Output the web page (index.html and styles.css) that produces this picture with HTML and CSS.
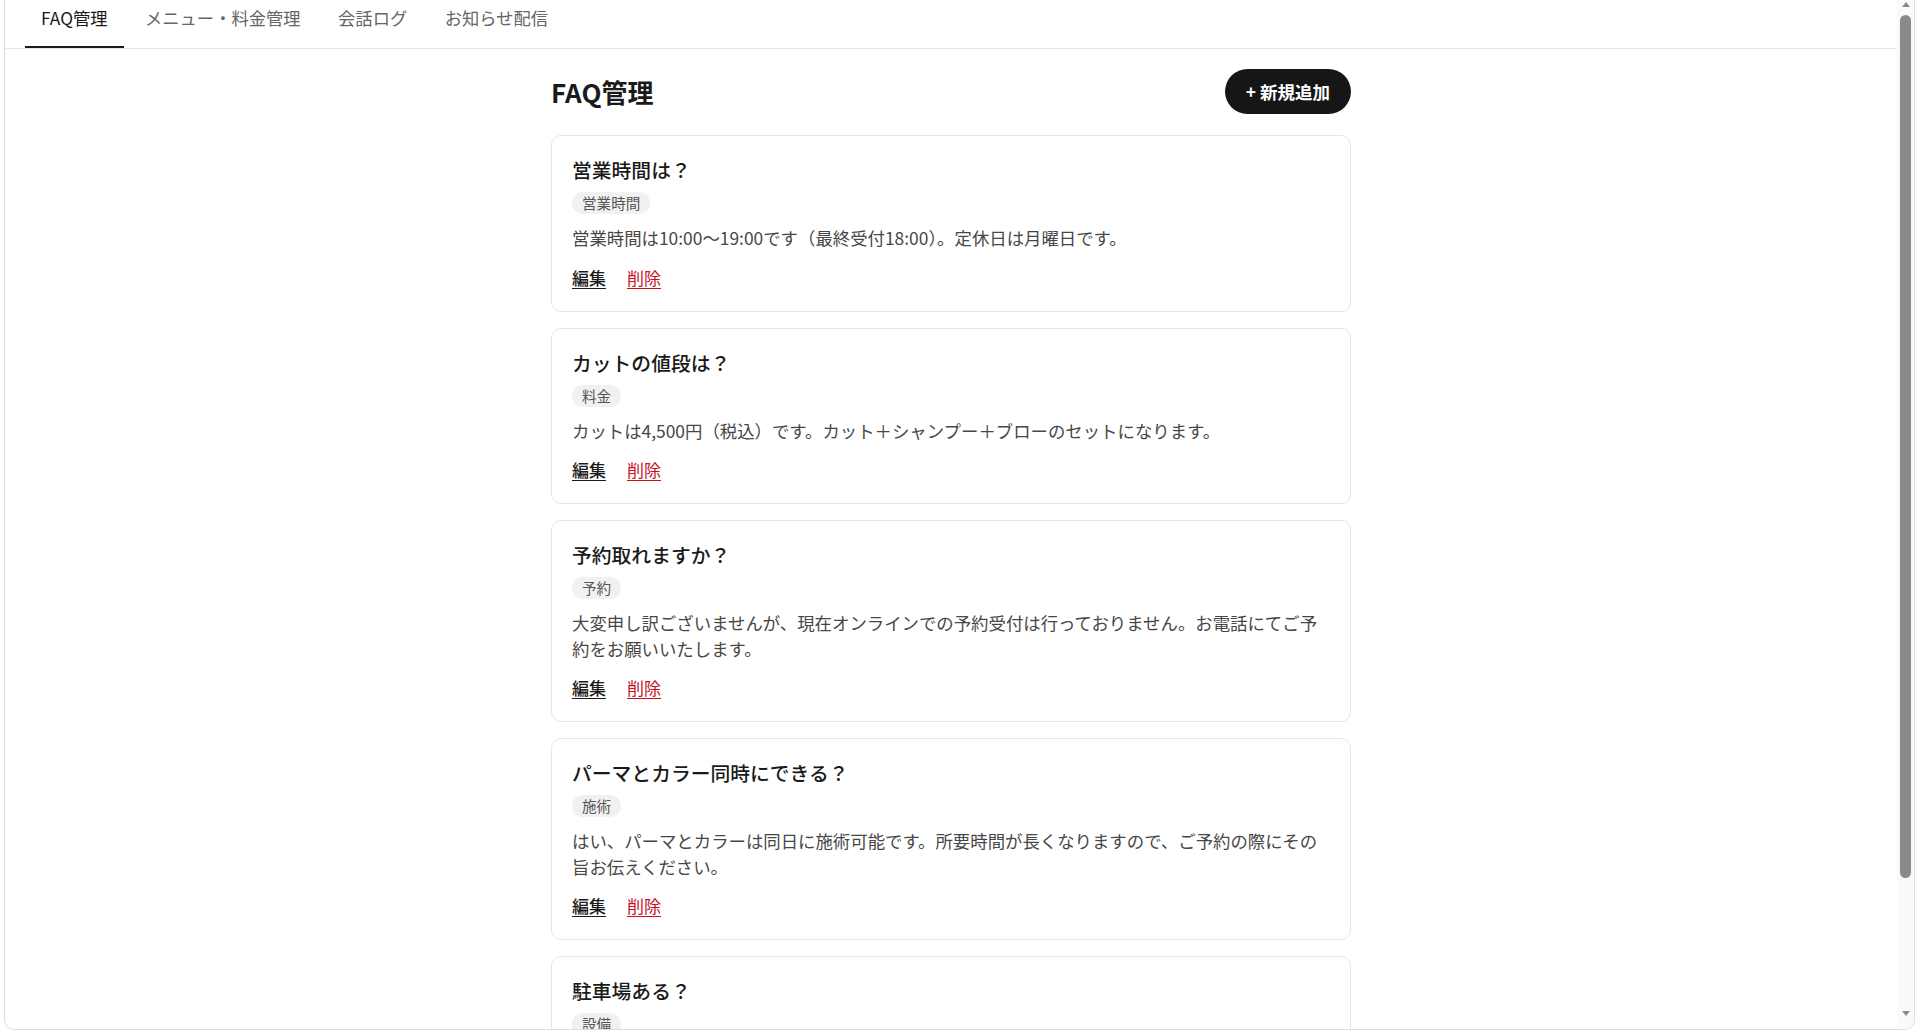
FILE: index.html
```html
<!DOCTYPE html>
<html lang="ja">
<head>
<meta charset="utf-8">
<title>FAQ管理</title>
<link rel="stylesheet" href="styles.css">
</head>
<body>
<div class="frame">
  <div class="viewport">
    <nav class="tabs">
      <a class="tab active" href="#faq">FAQ管理</a>
      <a class="tab" href="#menu">メニュー・料金管理</a>
      <a class="tab" href="#log">会話ログ</a>
      <a class="tab" href="#news">お知らせ配信</a>
    </nav>

    <main class="page">
      <div class="page-head">
        <h1>FAQ管理</h1>
        <button class="btn-add" type="button">+ 新規追加</button>
      </div>

      <div class="faq-list">
        <article class="faq-card">
          <h2 class="faq-q">営業時間は？</h2>
          <span class="faq-tag">営業時間</span>
          <p class="faq-a">営業時間は10:00〜19:00です（最終受付18:00）。定休日は月曜日です。</p>
          <div class="faq-actions"><a href="#" class="act-edit">編集</a><a href="#" class="act-del">削除</a></div>
        </article>

        <article class="faq-card">
          <h2 class="faq-q">カットの値段は？</h2>
          <span class="faq-tag">料金</span>
          <p class="faq-a">カットは4,500円（税込）です。カット＋シャンプー＋ブローのセットになります。</p>
          <div class="faq-actions"><a href="#" class="act-edit">編集</a><a href="#" class="act-del">削除</a></div>
        </article>

        <article class="faq-card">
          <h2 class="faq-q">予約取れますか？</h2>
          <span class="faq-tag">予約</span>
          <p class="faq-a">大変申し訳ございませんが、現在オンラインでの予約受付は行っておりません。お電話にてご予約をお願いいたします。</p>
          <div class="faq-actions"><a href="#" class="act-edit">編集</a><a href="#" class="act-del">削除</a></div>
        </article>

        <article class="faq-card">
          <h2 class="faq-q">パーマとカラー同時にできる？</h2>
          <span class="faq-tag">施術</span>
          <p class="faq-a">はい、パーマとカラーは同日に施術可能です。所要時間が長くなりますので、ご予約の際にその旨お伝えください。</p>
          <div class="faq-actions"><a href="#" class="act-edit">編集</a><a href="#" class="act-del">削除</a></div>
        </article>

        <article class="faq-card">
          <h2 class="faq-q">駐車場ある？</h2>
          <span class="faq-tag">設備</span>
          <p class="faq-a">店舗前に2台分の駐車スペースがございます。満車の際は近隣のコインパーキングをご利用ください。</p>
          <div class="faq-actions"><a href="#" class="act-edit">編集</a><a href="#" class="act-del">削除</a></div>
        </article>
      </div>
    </main>
  </div>

  <!-- scrollbar of the panel (at top) -->
  <div class="scrollbar">
    <span class="sb-up"></span>
    <span class="sb-thumb"></span>
    <span class="sb-down"></span>
  </div>
</div>
</body>
</html>
```

FILE: styles.css
```css
html, body { margin: 0; padding: 0; background: #fff; }
body {
  font-family: "Noto Sans CJK JP", "Noto Sans", sans-serif;
  color: #1a1a1a;
  padding: 0 5px 2px 4px;
}

/* outer panel */
.frame {
  display: flex;
  height: 1030px;
  box-sizing: border-box;
  border: 1px solid #dedede;
  border-top: none;
  border-radius: 0 0 10px 10px;
  overflow: hidden;
  background: #fff;
}
.viewport { flex: 1; min-width: 0; overflow: hidden; }

.scrollbar {
  width: 17px;
  flex: none;
  display: flex;
  flex-direction: column;
  align-items: center;
  background: #fafafa;
  padding-top: 2px;
}
.sb-up, .sb-down {
  width: 0;
  height: 0;
  border-left: 4px solid transparent;
  border-right: 4px solid transparent;
}
.sb-up { border-bottom: 5px solid #8a8a8a; }
.sb-down { border-top: 5px solid #8a8a8a; margin-top: auto; margin-bottom: 13px; }
.sb-thumb {
  width: 11px;
  height: 863px;
  margin-top: 8px;
  border-radius: 6px;
  background: #8a8a8a;
}

/* tabs */
.tabs {
  display: flex;
  gap: 5.5px;
  padding: 0 20px;
  border-bottom: 1px solid #e6e6e6;
}
.tab {
  display: block;
  padding: 5px 16px 15px;
  font-size: 17.3px;
  line-height: 26px;
  color: #666;
  text-decoration: none;
  border-bottom: 2px solid transparent;
}
.tab.active { color: #1a1a1a; border-bottom-color: #1a1a1a; }

/* main column */
.page {
  max-width: 800px;
  margin: 0 auto;
  padding: 20px 0 62px;
}
.page-head {
  display: flex;
  align-items: center;
  justify-content: space-between;
  margin-bottom: 21px;
}
.page-head h1 {
  margin: 0;
  font-size: 26px;
  line-height: 45px;
  font-weight: 700;
  color: #1a1a1a;
}
.btn-add {
  height: 45px;
  padding: 0 21px;
  border: none;
  border-radius: 23px;
  background: #161616;
  color: #fff;
  font-family: inherit;
  font-size: 17.5px;
  font-weight: 700;
  cursor: pointer;
}

.faq-list { display: flex; flex-direction: column; gap: 16px; }
.faq-card {
  display: flex;
  flex-direction: column;
  align-items: flex-start;
  padding: 20px 20px 21px;
  border: 1px solid #e6e6e6;
  border-radius: 10px;
  background: #fff;
}
.faq-q {
  margin: 0;
  font-size: 19.8px;
  line-height: 28px;
  font-weight: 500;
  color: #1a1a1a;
}
.faq-tag {
  margin-top: 8px;
  padding: 0 10px;
  font-size: 14.6px;
  line-height: 22px;
  color: #555;
  background: #f1f1f1;
  border-radius: 11px;
}
.faq-a {
  margin: 11px 0 0;
  font-size: 17.4px;
  line-height: 25.5px;
  color: #474747;
}
.faq-actions {
  display: flex;
  gap: 21px;
  margin-top: 14px;
  font-size: 17px;
  line-height: 25px;
}
.faq-actions a { text-underline-offset: 3px; }
.act-edit { color: #1a1a1a; font-weight: 500; }
.act-del { color: #c4121f; }
```
